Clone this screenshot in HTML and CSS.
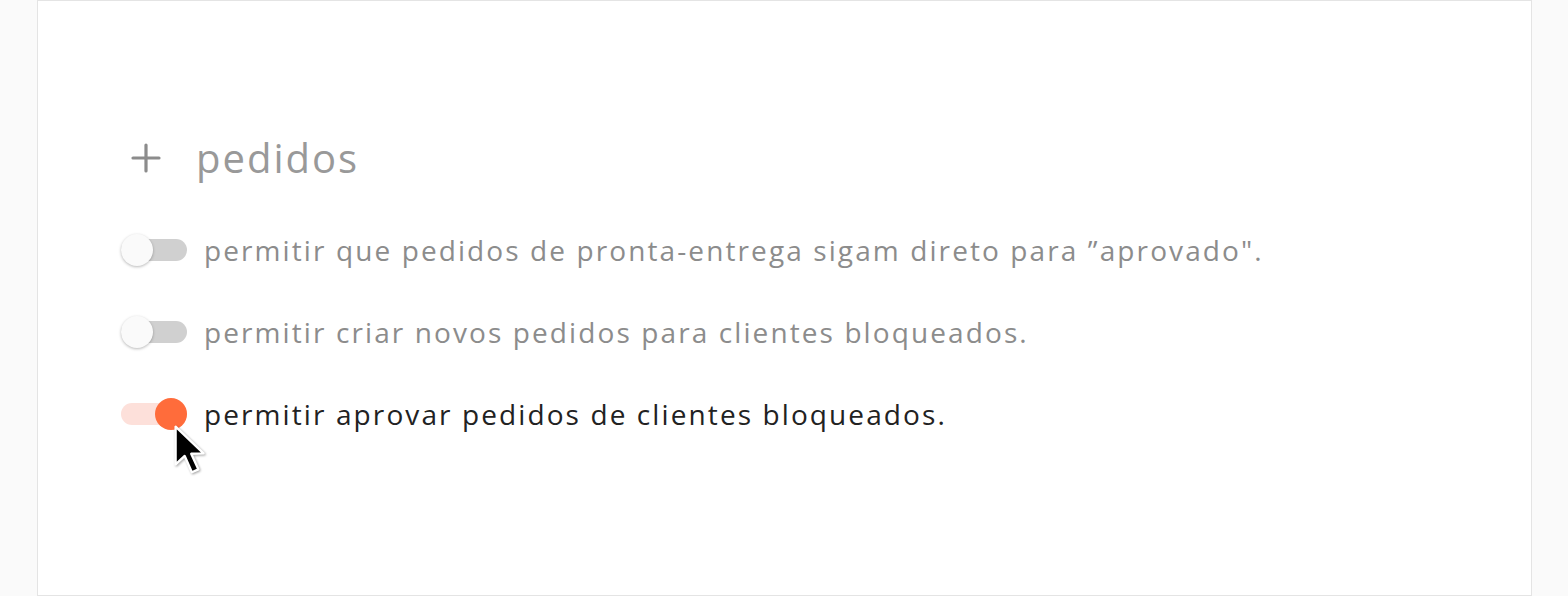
FILE: index.html
```html
<!DOCTYPE html>
<html lang="pt">
<head>
<meta charset="utf-8">
<link rel="stylesheet" href="styles.css">
</head>
<body>
<div class="card">
  <div class="heading">
    <svg class="plus" width="32" height="32" viewBox="0 0 32 32"><path d="M16 3v26M3 16h26" stroke="#8c8c8c" stroke-width="3.2" stroke-linecap="round" fill="none"/></svg>
    <span class="heading-text">pedidos</span>
  </div>
  <div class="rows">
    <div class="row">
      <span class="toggle"><span class="track"></span><span class="knob"></span></span>
      <span class="label">permitir que pedidos de pronta-entrega sigam direto para ”aprovado".</span>
    </div>
    <div class="row">
      <span class="toggle"><span class="track"></span><span class="knob"></span></span>
      <span class="label">permitir criar novos pedidos para clientes bloqueados.</span>
    </div>
    <div class="row active">
      <span class="toggle on"><span class="track"></span><span class="knob"></span>
        <svg class="cursor" width="39" height="60" viewBox="0 0 30 46"><path d="M2 2 L2 31 L9 24.5 L14.5 37 L19.5 34.8 L14 22.8 L23.5 22.5 Z" fill="#000" stroke="#fff" stroke-width="1.8" stroke-linejoin="round"/></svg>
      </span>
      <span class="label">permitir aprovar pedidos de clientes bloqueados.</span>
    </div>
  </div>
</div>
</body>
</html>
```
FILE: styles.css
```css
html, body {
  margin: 0;
  padding: 0;
  background: #fafafa;
  font-family: "Open Sans", "Noto Sans", sans-serif;
}
.card {
  box-sizing: border-box;
  margin-left: 37px;
  width: 1495px;
  height: 596px;
  background: #fff;
  border: 1px solid #e4e4e4;
  padding: 136px 0 0 92px;
}
.heading {
  display: flex;
  align-items: center;
  gap: 34px;
  height: 42px;
}
.plus { display: block; }
.heading-text {
  font-size: 40px;
  color: #999;
  line-height: 42px;
  letter-spacing: 2px;
}
.rows {
  margin-top: 55px;
  margin-left: -9px;
  display: flex;
  flex-direction: column;
  gap: 50px;
}
.row {
  display: flex;
  align-items: center;
  height: 32px;
}
.toggle {
  position: relative;
  width: 66px;
  height: 32px;
  flex: none;
  margin-right: 17px;
}
.track {
  position: absolute;
  left: 0;
  top: 5px;
  width: 66px;
  height: 22px;
  border-radius: 11px;
  background: #d0d0d0;
}
.knob {
  position: absolute;
  left: 0;
  top: 0;
  width: 32px;
  height: 32px;
  border-radius: 50%;
  background: #fafafa;
  box-shadow: 0 1px 3px rgba(0,0,0,0.28);
}
.toggle.on .track { background: #fde0da; }
.toggle.on .knob {
  left: 34px;
  background: #ff6c3b;
  box-shadow: none;
}
.cursor {
  position: absolute;
  left: 52px;
  top: 26px;
  filter: drop-shadow(1px 1px 1px rgba(0,0,0,0.35));
}
.label {
  font-size: 28px;
  color: #8c8c8c;
  letter-spacing: 2.1px;
  line-height: 32px;
}
.row.active .label { color: #222; }
```
